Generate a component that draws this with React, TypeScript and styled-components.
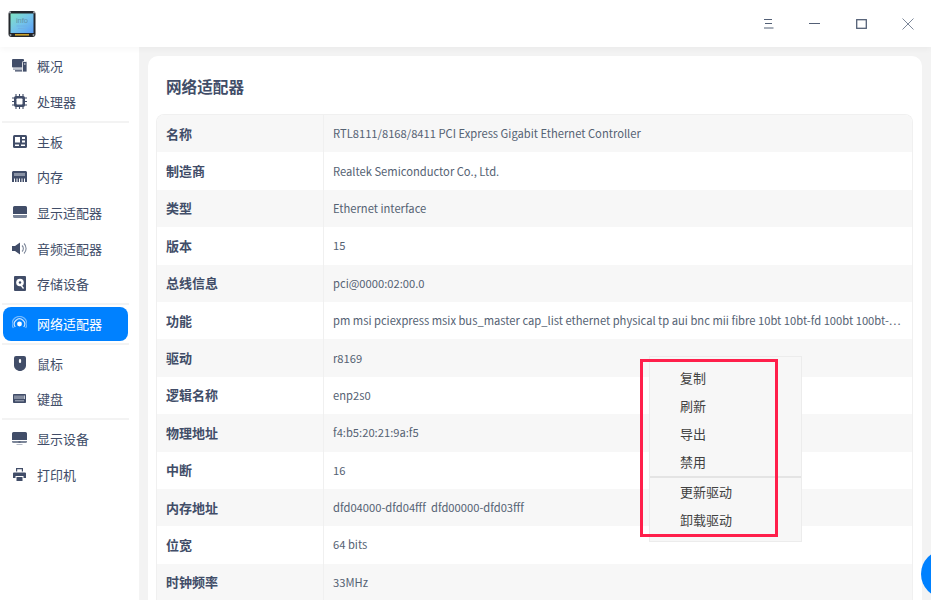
import React from "react";
import styled, { createGlobalStyle } from "styled-components";

const GlobalStyle = createGlobalStyle`
  html, body {
    margin: 0;
    padding: 0;
    width: 931px;
    height: 600px;
    overflow: hidden;
    background: #f3f3f3;
    font-family: "Noto Sans CJK SC", "Noto Sans", sans-serif;
  }
`;

const Frame = styled.div`
  position: relative;
  width: 931px;
  height: 600px;
  overflow: hidden;
  display: flex;
  flex-direction: column;
`;

const TitleBar = styled.header`
  height: 47px;
  flex: none;
  background: #ffffff;
  display: flex;
  align-items: center;
  padding-left: 8px;
  box-shadow: 0 2px 6px rgba(0, 0, 0, 0.04);
  position: relative;
  z-index: 1;
`;

const WindowButtons = styled.div`
  margin-left: auto;
  display: flex;
`;

const WindowButton = styled.div`
  width: 46.5px;
  height: 47px;
  display: flex;
  align-items: center;
  justify-content: center;
  color: #536076;
`;

const Body = styled.div`
  flex: 1;
  display: flex;
  min-height: 0;
`;

const Sidebar = styled.nav`
  width: 139px;
  flex: none;
  background: #ffffff;
  border-right: 1px solid #f4f4f4;
  padding-top: 1.4px;
  display: flex;
  flex-direction: column;
  align-items: flex-start;
`;

const NavItem = styled.div<{ $active?: boolean }>`
  width: 125px;
  height: 34px;
  margin: 0.85px 0 0.85px 3px;
  border-radius: 8px;
  display: flex;
  align-items: center;
  gap: 10px;
  padding-left: 9px;
  padding-bottom: 1px;
  box-sizing: border-box;
  font-size: 13px;
  color: ${(p) => (p.$active ? "#ffffff" : "#414d68")};
  background: ${(p) => (p.$active ? "#0081ff" : "transparent")};
`;

const NavIcon = styled.span`
  width: 15px;
  height: 15px;
  flex: none;
  display: flex;
  align-items: center;
  justify-content: center;
`;

const NavSeparator = styled.div`
  width: 127px;
  height: 2px;
  margin: 1px 0 1px 2px;
  background: #f3f3f3;
`;

const Main = styled.main`
  flex: 1;
  min-width: 0;
  padding: 9px 9px 0 8px;
`;

const Card = styled.section`
  height: 100%;
  background: #ffffff;
  border-radius: 10px 10px 0 0;
  padding: 0 9px 0 8px;
  box-sizing: border-box;
  overflow: hidden;
`;

const CardTitle = styled.h1`
  margin: 0;
  height: 58px;
  padding-left: 10px;
  padding-top: 1px;
  box-sizing: border-box;
  display: flex;
  align-items: center;
  font-size: 15.6px;
  font-weight: 700;
  color: #414d68;
`;

const Table = styled.div`
  border: 1px solid #f0f0f0;
  border-bottom: none;
  border-radius: 8px 8px 0 0;
  overflow: hidden;
`;

const Row = styled.div`
  display: grid;
  grid-template-columns: 167px 1fr;
  height: 37.4px;
  align-items: stretch;
  &:nth-child(odd) {
    background: #f7f7f7;
  }
`;

const RowLabel = styled.div`
  display: flex;
  align-items: center;
  padding: 0 0 1px 9px;
  font-size: 13px;
  font-weight: 700;
  color: #414d68;
  border-right: 1px solid #f0f0f0;
`;

const RowValue = styled.div`
  display: flex;
  align-items: center;
  padding: 0 4px 1px 9px;
  font-size: 11.2px;
  color: #556273;
  white-space: pre;
  overflow: hidden;
  min-width: 0;
`;

const ContextMenu = styled.div`
  position: absolute;
  left: 649px;
  top: 356px;
  width: 153px;
  height: 186px;
  box-sizing: border-box;
  padding-top: 7px;
  background: #f7f7f7;
  border: 1px solid #ececec;
  z-index: 3;
`;

const MenuItem = styled.div`
  height: 28px;
  box-sizing: border-box;
  display: flex;
  align-items: center;
  padding: 0 0 2px 30px;
  font-size: 13px;
  color: #414141;
`;

const MenuSeparator = styled.div`
  height: 2px;
  background: #e4e4e4;
`;

const Highlight = styled.div`
  position: absolute;
  left: 640px;
  top: 359px;
  width: 138px;
  height: 178px;
  box-sizing: border-box;
  border: 3px solid #ff1f4b;
  z-index: 4;
`;

const FloatingDot = styled.div`
  position: absolute;
  left: 921px;
  top: 550px;
  width: 48px;
  height: 48px;
  border-radius: 50%;
  background: #0081ff;
  z-index: 2;
`;

const AppLogo = () => (
  <svg width="28" height="28" viewBox="0 0 28 28">
    <defs>
      <linearGradient id="screen" x1="0" y1="0" x2="1" y2="1">
        <stop offset="0" stopColor="#7fe3c4" />
        <stop offset="0.5" stopColor="#74c4ea" />
        <stop offset="1" stopColor="#5a9cf5" />
      </linearGradient>
    </defs>
    <rect x="0.5" y="1" width="27" height="26" rx="3" fill="#23262b" />
    <rect x="2.5" y="3.5" width="23" height="19.5" fill="url(#screen)" />
    <rect x="7" y="24" width="14" height="1.6" fill="#c9a02c" />
    <circle cx="2" cy="2.5" r="1" fill="#9aa0a8" />
    <circle cx="26" cy="2.5" r="1" fill="#9aa0a8" />
    <circle cx="2.500" cy="25" r="1" fill="#9aa0a8" />
    <circle cx="25.500" cy="25" r="1" fill="#9aa0a8" />
    <text x="14" y="12.500" textAnchor="middle" fontSize="7.500" fontFamily="Liberation Sans, sans-serif" fill="#5f93a8">
      info
    </text>
    <rect x="8.500" y="15.500" width="11" height="1" fill="#6fb2e6" />
    <rect x="10" y="18" width="8" height="1" fill="#6fb2e6" />
  </svg>
);

const fill = "#414d68";

const icons: Record<string, React.ReactNode> = {
  overview: (
    <svg width="15" height="13" viewBox="0 0 15 13">
      <rect x="0" y="0" width="12" height="8.500" rx="1" fill={fill} />
      <rect x="1" y="9.500" width="9.500" height="1.200" fill="#8a93a5" />
      <rect x="3" y="11.200" width="7" height="1.300" fill={fill} />
      <rect x="10.500" y="2.500" width="4.500" height="10.500" rx="0.800" fill={fill} stroke="#fff" strokeWidth="0.800" />
      <rect x="12" y="4.500" width="1.500" height="1" fill="#fff" />
    </svg>
  ),
  cpu: (
    <svg width="15" height="15" viewBox="0 0 15 15">
      <path d="M4 0v15M7.500 0v15M11 0v15M0 4h15M0 7.500h15M0 11h15" stroke={fill} strokeWidth="1.100" />
      <rect x="2" y="2" width="11" height="11" rx="2" fill={fill} />
      <rect x="4.500" y="4.500" width="6" height="6" rx="0.800" fill="#fff" />
    </svg>
  ),
  board: (
    <svg width="14" height="13" viewBox="0 0 14 13">
      <rect x="0" y="0" width="14" height="13" rx="1.500" fill={fill} />
      <rect x="2" y="2" width="5" height="5.500" fill="#fff" />
      <rect x="9" y="2" width="3" height="2" fill="#fff" />
      <rect x="9" y="5.500" width="3" height="2" fill="#fff" />
      <rect x="2" y="9.500" width="4" height="1.500" fill="#fff" />
      <rect x="8" y="9.500" width="4" height="1.500" fill="#fff" />
    </svg>
  ),
  memory: (
    <svg width="15" height="12" viewBox="0 0 15 12">
      <path d="M1 0h13l1 1v10H0V1z" fill={fill} />
      <rect x="2" y="2" width="11" height="3" fill="#8a93a5" />
      <path d="M2.500 7.500v4.500M5 7.500v4.500M7.500 7.500v4.500M10 7.500v4.500M12.500 7.500v4.500" stroke="#fff" strokeWidth="1" />
    </svg>
  ),
  gpu: (
    <svg width="14" height="12" viewBox="0 0 14 12">
      <path d="M1.500 0h11A1.500 1.500 0 0 1 14 1.500V8H0V1.500A1.500 1.500 0 0 1 1.500 0z" fill={fill} />
      <path d="M0 9h14v1.500a1.500 1.500 0 0 1-1.500 1.500h-11A1.500 1.500 0 0 1 0 10.500z" fill="#7c8699" />
    </svg>
  ),
  sound: (
    <svg width="15" height="13" viewBox="0 0 15 13">
      <path d="M0 4h3l5-3.500v12L3 9H0z" fill={fill} />
      <path d="M10 3.500a4 4 0 0 1 0 6M12 1.500a7 7 0 0 1 0 10" fill="none" stroke="#7c8699" strokeWidth="1.100" />
    </svg>
  ),
  storage: (
    <svg width="12" height="15" viewBox="0 0 12 15">
      <rect x="0" y="0" width="12" height="15" rx="1" fill={fill} />
      <circle cx="6" cy="6.500" r="3.800" fill="#fff" />
      <circle cx="6" cy="6.500" r="1.200" fill={fill} />
      <path d="M6.500 8.500l3 4" stroke="#fff" strokeWidth="1.300" />
    </svg>
  ),
  network: (
    <svg width="15" height="15" viewBox="0 0 15 15" fill="none">
      <circle cx="7.500" cy="8" r="2.400" fill="#fff" />
      <path d="M3.200 11a5.200 5.200 0 1 1 8.600 0" stroke="#fff" strokeOpacity="0.800" strokeWidth="1.200" />
      <path d="M1.400 12a7.400 7.400 0 1 1 12.200 0" stroke="#fff" strokeOpacity="0.450" strokeWidth="1.200" />
    </svg>
  ),
  mouse: (
    <svg width="12" height="15" viewBox="0 0 12 15">
      <path d="M2 0h8a2 2 0 0 1 2 2v7.500C12 12.500 9 15 6 15S0 12.500 0 9.500V2a2 2 0 0 1 2-2z" fill={fill} />
      <rect x="4.900" y="3" width="2.200" height="4" rx="1.100" fill="#fff" />
    </svg>
  ),
  keyboard: (
    <svg width="13" height="9" viewBox="0 0 13 9">
      <rect x="0" y="0" width="13" height="9" rx="0.800" fill={fill} />
      <path d="M2 1.500v3.500M4 1.500v3.500M6 1.500v3.500M8 1.500v3.500M10 1.500v3.500M11.500 1.500v3.500" stroke="#c6cbd5" strokeWidth="1" />
      <path d="M2 6.800h9" stroke="#c6cbd5" strokeWidth="0.800" />
    </svg>
  ),
  monitor: (
    <svg width="15" height="13" viewBox="0 0 15 13">
      <path d="M1.500 0h12A1.500 1.500 0 0 1 15 1.500V8H0V1.500A1.500 1.500 0 0 1 1.500 0z" fill={fill} />
      <path d="M0 9h15v.500A1.500 1.500 0 0 1 13.500 11h-12A1.500 1.500 0 0 1 0 9.500z" fill="#7c8699" />
      <rect x="6.500" y="9.500" width="2" height="1" fill={fill} />
      <rect x="4.500" y="12" width="6" height="1" fill="#b4bac6" />
    </svg>
  ),
  printer: (
    <svg width="13" height="13" viewBox="0 0 13 13">
      <path d="M3 3.500V0h7v3.500h-1.200V1.200H4.200v2.300z" fill={fill} />
      <path d="M1 4.500h11a1 1 0 0 1 1 1V10h-2.500V8h-8v2H0V5.500a1 1 0 0 1 1-1z" fill={fill} />
      <rect x="3.500" y="9" width="6" height="4" fill={fill} />
    </svg>
  ),
};

type NavEntry = { label: string; icon: string; active?: boolean } | "separator";

const navEntries: NavEntry[] = [
  { label: "概况", icon: "overview" },
  { label: "处理器", icon: "cpu" },
  "separator",
  { label: "主板", icon: "board" },
  { label: "内存", icon: "memory" },
  { label: "显示适配器", icon: "gpu" },
  { label: "音频适配器", icon: "sound" },
  { label: "存储设备", icon: "storage" },
  "separator",
  { label: "网络适配器", icon: "network", active: true },
  "separator",
  { label: "鼠标", icon: "mouse" },
  { label: "键盘", icon: "keyboard" },
  "separator",
  { label: "显示设备", icon: "monitor" },
  { label: "打印机", icon: "printer" },
];

const rows = [
  ["名称", "RTL8111/8168/8411 PCI Express Gigabit Ethernet Controller"],
  ["制造商", "Realtek Semiconductor Co., Ltd."],
  ["类型", "Ethernet interface"],
  ["版本", "15"],
  ["总线信息", "pci@0000:02:00.0"],
  ["功能", "pm msi pciexpress msix bus_master cap_list ethernet physical tp aui bnc mii fibre 10bt 10bt-fd 100bt 100bt-…"],
  ["驱动", "r8169"],
  ["逻辑名称", "enp2s0"],
  ["物理地址", "f4:b5:20:21:9a:f5"],
  ["中断", "16"],
  ["内存地址", "dfd04000-dfd04fff  dfd00000-dfd03fff"],
  ["位宽", "64 bits"],
  ["时钟频率", "33MHz"],
];

const App = () => (
  <Frame>
    <GlobalStyle />
    <TitleBar>
      <AppLogo />
      <WindowButtons>
        <WindowButton>
          <svg width="11" height="11" viewBox="0 0 11 11" fill="none" stroke="currentColor">
            <path d="M1 1.500h8M2 5.500h7M1 10h9.500" />
          </svg>
        </WindowButton>
        <WindowButton>
          <svg width="11" height="3" viewBox="0 0 11 3" fill="none" stroke="currentColor">
            <path d="M0 1.500h11" />
          </svg>
        </WindowButton>
        <WindowButton>
          <svg width="11" height="10" viewBox="0 0 11 10" fill="none" stroke="currentColor" strokeWidth="1.300">
            <rect x="0.700" y="0.700" width="9.600" height="8.600" />
          </svg>
        </WindowButton>
        <WindowButton>
          <svg width="12" height="12" viewBox="0 0 12 12" fill="none" stroke="#7d889a">
            <path d="M0.500 0.500l11 11M11.500 0.500l-11 11" />
          </svg>
        </WindowButton>
      </WindowButtons>
    </TitleBar>
    <Body>
      <Sidebar>
        {navEntries.map((entry, i) =>
          entry === "separator" ? (
            <NavSeparator key={i} />
          ) : (
            <NavItem key={entry.label} $active={entry.active}>
              <NavIcon>{icons[entry.icon]}</NavIcon>
              {entry.label}
            </NavItem>
          )
        )}
      </Sidebar>
      <Main>
        <Card>
          <CardTitle>网络适配器</CardTitle>
          <Table>
            {rows.map(([label, value]) => (
              <Row key={label}>
                <RowLabel>{label}</RowLabel>
                <RowValue>{value}</RowValue>
              </Row>
            ))}
          </Table>
        </Card>
      </Main>
    </Body>
    <ContextMenu>
      <MenuItem>复制</MenuItem>
      <MenuItem>刷新</MenuItem>
      <MenuItem>导出</MenuItem>
      <MenuItem>禁用</MenuItem>
      <MenuSeparator />
      <MenuItem>更新驱动</MenuItem>
      <MenuItem>卸载驱动</MenuItem>
    </ContextMenu>
    <Highlight />
    <FloatingDot />
  </Frame>
);

export default App;
